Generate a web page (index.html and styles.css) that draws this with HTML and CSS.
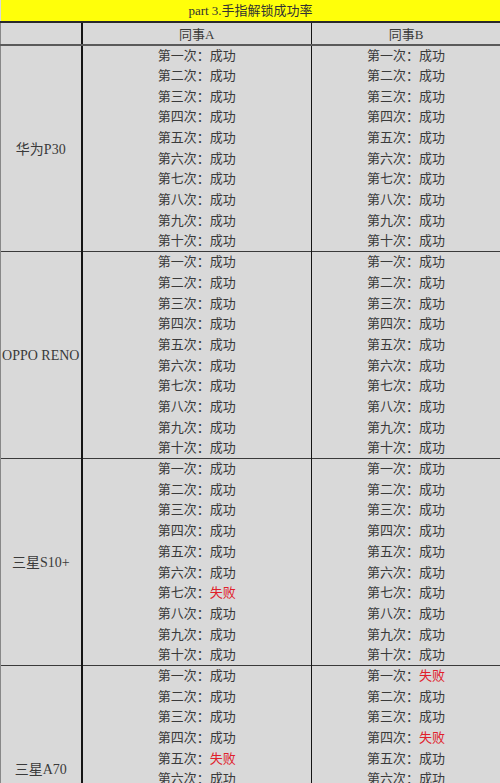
FILE: index.html
```html
<!DOCTYPE html>
<html lang="zh-CN">
<head>
<meta charset="utf-8">
<title>part 3.手指解锁成功率</title>
<link rel="stylesheet" href="styles.css">
</head>
<body>
<table class="sheet">
  <colgroup>
    <col class="c-dev">
    <col class="c-a">
    <col class="c-b">
  </colgroup>
  <thead>
    <tr class="title-row"><th colspan="3" class="title">part 3.手指解锁成功率</th></tr>
    <tr class="head-row"><th class="dev"></th><th class="colA">同事A</th><th class="colB">同事B</th></tr>
  </thead>
  <tbody id="g1" class="group"></tbody>
  <tbody id="g2" class="group"></tbody>
  <tbody id="g3" class="group"></tbody>
  <tbody id="g4" class="group"></tbody>
</table>
<script src="app.js"></script>
</body>
</html>
```
FILE: styles.css
```css
html, body {
  margin: 0;
  padding: 0;
  background: #d9d9d9;
}
body {
  font-family: "Liberation Serif", "Noto Sans CJK SC", serif;
  font-size: 13px;
  color: #3a3a3a;
  width: 500px;
  overflow: hidden;
}
.sheet {
  width: 500px;
  table-layout: fixed;
  border-collapse: collapse;
  background: #d9d9d9;
}
.c-dev { width: 81px; }
.c-a { width: 230px; }
.c-b { width: 189px; }
.title-row { height: 22px; }
.title {
  background: #ffff0a;
  font-weight: normal;
  color: #333;
  padding: 0;
  text-align: center;
  border-bottom: 2px solid #2a2a2a;
  line-height: 20px;
}
.head-row { height: 23px; }
.head-row th {
  font-weight: normal;
  padding: 0;
  text-align: center;
  border-bottom: 2px solid #5a5a5a;
}
.dev {
  border-left: 1px solid #888;
  border-right: 2px solid #151515;
}
.colA { border-right: 1px solid #151515; }
.colB { border-right: 1px solid #bbb; }
.group tr { height: 20.7px; }
.group td {
  padding: 0;
  text-align: center;
  line-height: 18px;
  white-space: nowrap;
}
.group tr:first-child td { border-top: 1px solid #3a3a3a; }
.group td.label {
  vertical-align: middle;
  font-size: 14px;
  padding-top: 2px;
}
.fail { color: #e0202a; }
```
FILE: app.js
```js
const groups = [
  { id: "g1", name: "华为P30", a: [], b: [] },
  { id: "g2", name: "OPPO RENO", a: [], b: [] },
  { id: "g3", name: "三星S10+", a: [7], b: [] },
  { id: "g4", name: "三星A70", a: [5], b: [1, 4] }
];
const nums = ["一", "二", "三", "四", "五", "六", "七", "八", "九", "十"];
function cell(cls, n, fails) {
  const td = document.createElement("td");
  td.className = cls;
  td.appendChild(document.createTextNode("第" + nums[n - 1] + "次："));
  const s = document.createElement("span");
  if (fails.includes(n)) { s.className = "fail"; s.textContent = "失败"; }
  else { s.textContent = "成功"; }
  td.appendChild(s);
  return td;
}
groups.forEach(g => {
  const tb = document.getElementById(g.id);
  for (let i = 1; i <= 10; i++) {
    const tr = document.createElement("tr");
    if (i === 1) {
      const l = document.createElement("td");
      l.rowSpan = 10;
      l.className = "dev label";
      l.textContent = g.name;
      tr.appendChild(l);
    }
    tr.appendChild(cell("colA", i, g.a));
    tr.appendChild(cell("colB", i, g.b));
    tb.appendChild(tr);
  }
});
```
